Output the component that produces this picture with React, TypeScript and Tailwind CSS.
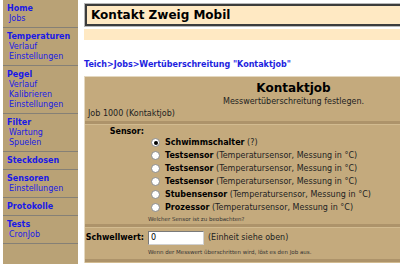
import React from "react";

type Section = { title: string; items: string[] };

const sections: Section[] = [
  { title: "Home", items: ["Jobs"] },
  { title: "Temperaturen", items: ["Verlauf", "Einstellungen"] },
  { title: "Pegel", items: ["Verlauf", "Kalibrieren", "Einstellungen"] },
  { title: "Filter", items: ["Wartung", "Spuelen"] },
  { title: "Steckdosen", items: [] },
  { title: "Sensoren", items: ["Einstellungen"] },
  { title: "Protokolle", items: [] },
  { title: "Tests", items: ["CronJob"] },
];

const sensors = [
  { name: "Schwimmschalter", info: "(?)", checked: true },
  { name: "Testsensor", info: "(Temperatursensor, Messung in °C)" },
  { name: "Testsensor", info: "(Temperatursensor, Messung in °C)" },
  { name: "Testsensor", info: "(Temperatursensor, Messung in °C)" },
  { name: "Stubensensor", info: "(Temperatursensor, Messung in °C)" },
  { name: "Prozessor", info: "(Temperatursensor, Messung in °C)" },
];

const Radio: React.FC<{ checked?: boolean }> = ({ checked }) => (
  <span className="w-[9px] h-[9px] rounded-full bg-white border border-[#8a8a8a] flex items-center justify-center shrink-0">
    {checked && <span className="w-[4px] h-[4px] rounded-full bg-black" />}
  </span>
);

const Separator: React.FC = () => (
  <div className="h-[4px] bg-[#ad936a] border-b border-[#d2bb90]" />
);

export default function App() {
  return (
    <div className="w-[400px] h-[264px] overflow-hidden bg-white flex font-['DejaVu_Sans',sans-serif]">
      {/* Sidebar */}
      <div className="ml-[3px] w-[75px] shrink-0 bg-[#b9a276] h-full">
        {sections.map((s) => (
          <div key={s.title} className="pt-[4px] pb-[3px] border-b border-[#858076]">
            <div className="pl-[4px] text-[8px] leading-[10px] font-bold text-[#1a1ae6]">
              {s.title}
            </div>
            {s.items.map((it, i) => (
              <div key={i} className="pl-[6px] text-[8px] leading-[10px] text-[#1a1ae6]">
                {it}
              </div>
            ))}
          </div>
        ))}
      </div>

      {/* Main */}
      <div className="ml-[6px] w-[418px] shrink-0">
        {/* Header */}
        <div className="mt-[3px] border border-[#b8b8b8]">
          <div className="border-2 border-[#3c3c3c] bg-[#ffe9c3] h-[22px] flex items-center pl-[4px]">
            <span className="text-[12px] font-bold text-black">Kontakt Zweig Mobil</span>
          </div>
        </div>
        <div className="mt-[2px] h-[11px] bg-[#ffe9c3]" />

        {/* Breadcrumb */}
        <div className="mt-[20px] text-[8px] leading-[10px] font-bold text-[#1e1ee0]">
          Teich&gt;Jobs&gt;Wertüberschreitung "Kontaktjob"
        </div>

        {/* Content box */}
        <div className="mt-[6px] bg-[#c4aa7d] border-t border-l border-[#e4d8c0] text-black">
          <div className="pt-[4px] text-center text-[12px] leading-[15px] font-bold">Kontaktjob</div>
          <div className="text-center text-[8px] leading-[12px] text-[#222]">
            Messwertüberschreitung festlegen.
          </div>
          <div className="pl-[3px] text-[8px] leading-[12px] text-[#222] pb-[1px]">
            Job 1000 (Kontaktjob)
          </div>
          <Separator />

          {/* Sensor */}
          <div className="pt-[2px]">
            <div className="w-[59px] text-right text-[8px] leading-[9px] font-bold">Sensor:</div>
            <div className="pl-[66px]">
              {sensors.map((s, i) => (
                <div key={i} className="flex items-center h-[13px] gap-[5px]">
                  <Radio checked={s.checked} />
                  <span className="text-[8px] text-[#222] whitespace-nowrap">
                    <span className="font-bold text-black">{s.name}</span> {s.info}
                  </span>
                </div>
              ))}
            </div>
            <div className="pl-[63px] text-[5.5px] leading-[10px] text-[#333]">
              Welcher Sensor ist zu beobachten?
            </div>
          </div>
          <Separator />

          {/* Schwellwert */}
          <div className="pt-[3px]">
            <div className="flex items-center">
              <div className="w-[59px] text-right text-[8px] font-bold">Schwellwert:</div>
              <div className="ml-[4px] w-[56px] h-[14px] bg-white border border-t-[#7a7a7a] border-l-[#7a7a7a] border-r-[#d0d0d0] border-b-[#d0d0d0] text-[8px] leading-[12px] pl-[2px]">
                0
              </div>
              <span className="ml-[4px] text-[8px] text-[#222]">(Einheit siehe oben)</span>
            </div>
            <div className="pl-[63px] text-[5.5px] leading-[14px] text-[#333]">
              Wenn der Messwert überschritten wird, löst es den Job aus.
            </div>
          </div>
          <Separator />
        </div>
      </div>
    </div>
  );
}
